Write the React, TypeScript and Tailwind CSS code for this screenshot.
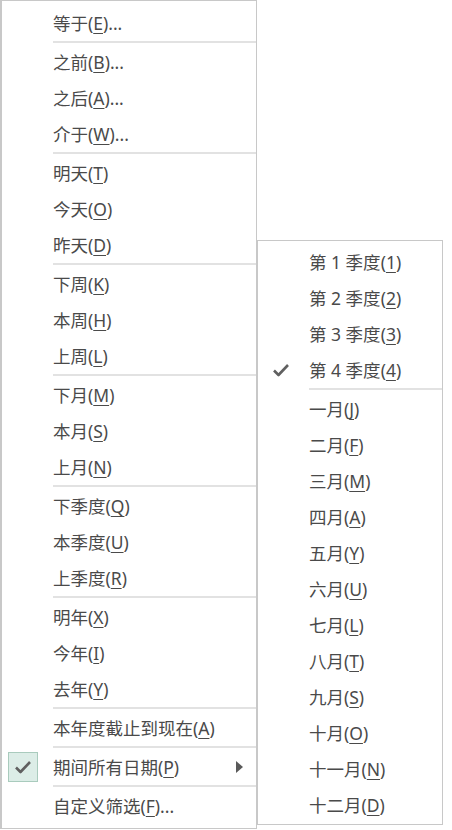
import React from "react";

type Item = { label: string; k: string; tail?: string };

const groups: Item[][] = [
  [{ label: "等于", k: "E", tail: "..." }],
  [
    { label: "之前", k: "B", tail: "..." },
    { label: "之后", k: "A", tail: "..." },
    { label: "介于", k: "W", tail: "..." },
  ],
  [
    { label: "明天", k: "T" },
    { label: "今天", k: "O" },
    { label: "昨天", k: "D" },
  ],
  [
    { label: "下周", k: "K" },
    { label: "本周", k: "H" },
    { label: "上周", k: "L" },
  ],
  [
    { label: "下月", k: "M" },
    { label: "本月", k: "S" },
    { label: "上月", k: "N" },
  ],
  [
    { label: "下季度", k: "Q" },
    { label: "本季度", k: "U" },
    { label: "上季度", k: "R" },
  ],
  [
    { label: "明年", k: "X" },
    { label: "今年", k: "I" },
    { label: "去年", k: "Y" },
  ],
  [{ label: "本年度截止到现在", k: "A" }],
];

const quarters: Item[] = [
  { label: "第 1 季度", k: "1" },
  { label: "第 2 季度", k: "2" },
  { label: "第 3 季度", k: "3" },
  { label: "第 4 季度", k: "4" },
];

const months: Item[] = [
  { label: "一月", k: "J" },
  { label: "二月", k: "F" },
  { label: "三月", k: "M" },
  { label: "四月", k: "A" },
  { label: "五月", k: "Y" },
  { label: "六月", k: "U" },
  { label: "七月", k: "L" },
  { label: "八月", k: "T" },
  { label: "九月", k: "S" },
  { label: "十月", k: "O" },
  { label: "十一月", k: "N" },
  { label: "十二月", k: "D" },
];

const Check = () => (
  <svg width="18" height="16" viewBox="0 0 18 16" fill="none">
    <path d="M2 8.5 L6.5 13 L16 3" stroke="#606060" strokeWidth="2.6" strokeLinejoin="round" />
  </svg>
);

const Label = ({ it }: { it: Item }) => (
  <span className="whitespace-nowrap">
    {it.label}(<span className="underline underline-offset-[3px] decoration-1">{it.k}</span>){it.tail}
  </span>
);

const Row = ({ it, check, boxed, arrow }: { it: Item; check?: boolean; boxed?: boolean; arrow?: boolean }) => (
  <div className="relative flex h-9 items-center pl-[51px]">
    {check && boxed && (
      <div className="absolute left-[6px] top-[3px] flex h-[30px] w-[30px] items-center justify-center border border-[#a9cbbd] bg-[#dcede7]">
        <Check />
      </div>
    )}
    {check && !boxed && (
      <div className="absolute left-[14px] top-[10px]">
        <Check />
      </div>
    )}
    <Label it={it} />
    {arrow && (
      <svg className="absolute left-[234px] top-[12px]" width="7" height="12" viewBox="0 0 7 12">
        <path d="M0 0 L7 6 L0 12 Z" fill="#5a5a5a" />
      </svg>
    )}
  </div>
);

const Sep = () => (
  <div className="h-[3px] pl-[51px]">
    <div className="h-[2px] bg-[#e2e2e2]" />
  </div>
);

export default function App() {
  return (
    <div
      className="relative h-[830px] w-[452px] overflow-hidden bg-white text-[17.5px] text-[#4a4a4a]"
      style={{ fontFamily: '"Noto Sans", "Noto Sans CJK SC", sans-serif' }}
    >
      <div className="w-[257px] border border-l-2 border-[#c8c8c8] bg-white pb-[4px] pt-[4px]">
        {groups.map((g, gi) => (
          <React.Fragment key={gi}>
            {g.map((it) => (
              <Row key={it.label} it={it} />
            ))}
            <Sep />
          </React.Fragment>
        ))}
        <Row it={{ label: "期间所有日期", k: "P" }} check boxed arrow />
        <Sep />
        <Row it={{ label: "自定义筛选", k: "F", tail: "..." }} />
      </div>

      <div className="absolute left-[256px] top-[240px] w-[187px] border border-l-2 border-[#c8c8c8] bg-white pb-[1px] pt-[3px]">
        {quarters.map((it, i) => (
          <Row key={it.label} it={it} check={i === 3} />
        ))}
        <Sep />
        {months.map((it) => (
          <Row key={it.label} it={it} />
        ))}
      </div>
    </div>
  );
}
